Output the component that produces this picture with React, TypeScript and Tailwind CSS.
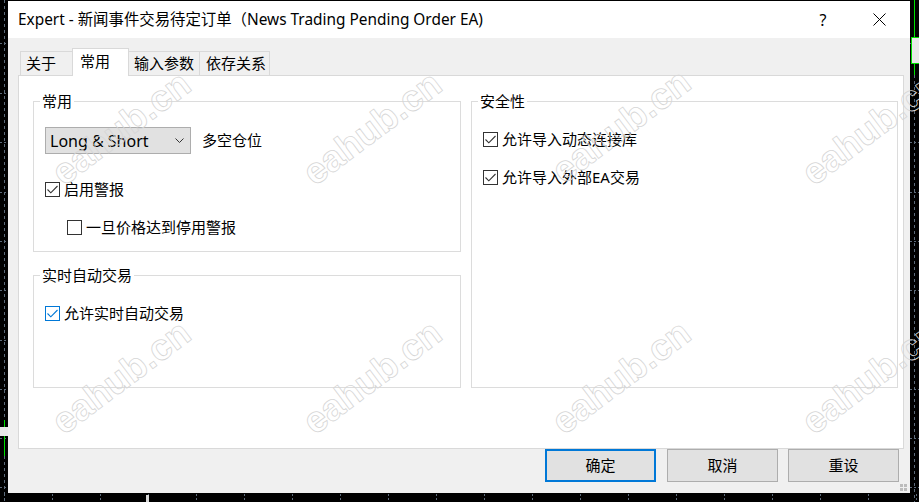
import React from 'react';

const FONT = "font-['Noto_Sans','Noto_Sans_CJK_SC',sans-serif]";

const CheckBox: React.FC<{ checked?: boolean; blue?: boolean }> = ({ checked, blue }) => (
  <span
    className={
      blue
        ? 'flex h-[15px] w-[15px] shrink-0 items-center justify-center border border-[#0078d7] bg-white'
        : 'flex h-[15px] w-[15px] shrink-0 items-center justify-center border border-[#333333] bg-white'
    }
  >
    {checked && (
      <svg width="13" height="13" viewBox="0 0 13 13">
        <path d="M1.5 6.5 L4.8 9.8 L11.5 3" fill="none" stroke={blue ? '#0078d7' : '#333333'} strokeWidth="1.1" />
      </svg>
    )}
  </span>
);

const CheckRow: React.FC<{ label: string; checked?: boolean; blue?: boolean; className?: string }> = ({ label, checked, blue, className }) => (
  <div className={`flex h-[20px] items-center gap-[4px] ${className ?? ''}`}>
    <CheckBox checked={checked} blue={blue} />
    <span className="leading-[20px]">{label}</span>
  </div>
);

const Group: React.FC<{ title: string; className: string; children: React.ReactNode }> = ({ title, className, children }) => (
  <div className={`flex flex-col border border-[#dcdcdc] pl-[11px] ${className}`}>
    <span className="-mt-[11px] -ml-[5px] self-start bg-white px-[2px] leading-[20px]">{title}</span>
    {children}
  </div>
);

const Tab: React.FC<{ label: string; className: string }> = ({ label, className }) => (
  <div className={`flex items-center border-[#d9d9d9] ${className}`}>{label}</div>
);

const Button: React.FC<{ label: string; primary?: boolean; className?: string }> = ({ label, primary, className }) => (
  <button
    className={
      primary
        ? `flex h-[33px] w-[111px] items-center justify-center border-2 border-[#0078d7] bg-[#e1e1e1] ${className ?? ''}`
        : `flex h-[33px] w-[111px] items-center justify-center border border-[#adadad] bg-[#e1e1e1] ${className ?? ''}`
    }
  >
    {label}
  </button>
);

const ChartBits: React.FC = () => {
  const ys = [43, 93, 142, 192, 241, 290, 340, 389, 438, 487];
  const xs = Array.from({ length: 20 }, (_, i) => 4 + i * 48);
  return (
    <svg className="absolute left-0 top-0" width="919" height="502" viewBox="0 0 919 502">
      <line x1="4.5" y1="0" x2="4.5" y2="502" stroke="#5d6b7a" strokeDasharray="3 3" />
      <line x1="914.5" y1="75" x2="914.5" y2="502" stroke="#5d6b7a" strokeDasharray="3 3" />
      {ys.map((y) => (
        <g key={y}>
          <line x1="0" y1={y + 0.5} x2="9" y2={y + 0.5} stroke="#5d6b7a" strokeDasharray="2 2" />
          <line x1="910" y1={y + 0.5} x2="919" y2={y + 0.5} stroke="#5d6b7a" strokeDasharray="2 2" />
        </g>
      ))}
      {xs.map((x) => (
        <line key={x} x1={x + 0.5} y1="494" x2={x + 0.5} y2="502" stroke="#5d6b7a" strokeDasharray="2 2" />
      ))}
      {/* candles */}
      <line x1="4.5" y1="420" x2="4.5" y2="456" stroke="#00e000" />
      <rect x="0" y="427" width="8" height="9" fill="#e8e8e8" />
      <line x1="914.5" y1="0" x2="914.5" y2="75" stroke="#00e000" />
      <rect x="911.5" y="37.5" width="8" height="26" fill="#e8e8e8" stroke="#00e000" />
      <rect x="146" y="495" width="3" height="7" fill="#d8d8d8" />
    </svg>
  );
};

const marks: [number, number][] = [
  [121, 128], [372, 128], [621, 126], [871, 128],
  [121, 377], [372, 377], [621, 377], [871, 377],
];

export default function App() {
  return (
    <div className={`relative flex h-[502px] w-[919px] overflow-hidden bg-black pl-[8px] pt-[1px] text-[15px] text-black ${FONT}`}>
      <ChartBits />

      <div className="relative flex h-[492px] w-[902px] flex-col bg-[#f0f0f0]">
        {/* title bar */}
        <div className="flex h-[37px] items-center bg-white pl-[10px]">
          <span className="text-[15.4px]">Expert - 新闻事件交易待定订单（News Trading Pending Order EA)</span>
          <span className="ml-auto w-[20px] text-center text-[16px]">?</span>
          <svg className="ml-[40px] mr-[24px]" width="13" height="13" viewBox="0 0 13 13">
            <path d="M0.5 0.5 L12.5 12.5 M12.5 0.5 L0.5 12.5" stroke="#000" strokeWidth="1" />
          </svg>
        </div>

        {/* body */}
        <div className="flex flex-1 flex-col pl-[10px] pr-[6px] pt-[10px]">
          <div className="ml-[2px] flex items-end">
            <Tab label="关于" className="h-[24px] w-[52px] border-l border-t pl-[5px]" />
            <Tab label="常用" className="relative z-10 -mb-[1px] h-[28px] w-[57px] border-l border-r border-t bg-white pb-[3px] pl-[7px]" />
            <Tab label="输入参数" className="h-[24px] w-[70px] border-t pl-[5px]" />
            <Tab label="依存关系" className="h-[24px] w-[71px] border-l border-r border-t pl-[6px]" />
          </div>

          <div className="flex h-[374px] gap-[10px] border border-[#d9d9d9] bg-white pl-[14px] pt-[25px]">
            <div className="flex w-[428px] flex-col gap-[23px]">
              <Group title="常用" className="h-[151px]">
                <div className="mt-[16px] flex items-center">
                  <div className="flex h-[27px] w-[146px] items-center justify-between border border-[#adadad] bg-[#e1e1e1] pl-[4px] pr-[6px] text-[16px]">
                    <span>Long &amp; Short</span>
                    <svg width="9" height="5" viewBox="0 0 9 5">
                      <path d="M0.5 0.5 L4.5 4.5 L8.5 0.5" fill="none" stroke="#333" strokeWidth="1" />
                    </svg>
                  </div>
                  <span className="ml-[11px]">多空仓位</span>
                </div>
                <CheckRow label="启用警报" checked className="mt-[25px]" />
                <CheckRow label="一旦价格达到停用警报" className="ml-[22px] mt-[18px]" />
              </Group>
              <Group title="实时自动交易" className="h-[113px]">
                <CheckRow label="允许实时自动交易" checked blue className="mt-[18px]" />
              </Group>
            </div>
            <Group title="安全性" className="h-[287px] w-[427px]">
              <CheckRow label="允许导入动态连接库" checked className="mt-[18px]" />
              <CheckRow label="允许导入外部EA交易" checked className="mt-[18px]" />
            </Group>
          </div>

          <div className="flex justify-end pr-[5px]">
            <Button label="确定" primary />
            <Button label="取消" className="ml-[11px]" />
            <Button label="重设" className="ml-[10px]" />
          </div>
        </div>

        {/* resize grip */}
        <div className="absolute bottom-[2px] right-[3px] grid grid-cols-2 gap-[1px]">
          <span className="h-[3px] w-[3px] bg-[#bcbcbc]" />
          <span className="h-[3px] w-[3px] bg-[#bcbcbc]" />
          <span className="h-[3px] w-[3px] bg-[#bcbcbc]" />
          <span className="h-[3px] w-[3px] bg-[#bcbcbc]" />
        </div>
      </div>

      {/* watermark */}
      {marks.map(([x, y]) => (
        <span
          key={`${x}-${y}`}
          className="pointer-events-none absolute -translate-x-1/2 -translate-y-1/2 -rotate-[37deg] whitespace-nowrap font-['Liberation_Sans',sans-serif] text-[37px] font-bold leading-none text-transparent [-webkit-text-stroke:0.8px_#d6d6d6]"
          style={{ left: x, top: y }}
        >
          eahub.cn
        </span>
      ))}
    </div>
  );
}
